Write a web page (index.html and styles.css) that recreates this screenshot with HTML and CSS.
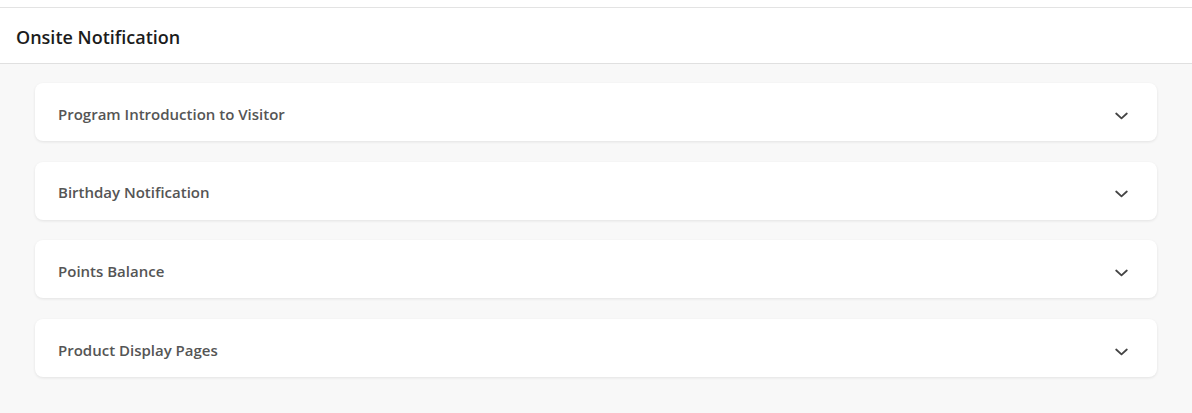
FILE: index.html
```html
<!DOCTYPE html>
<html>
<head>
<meta charset="utf-8">
<link rel="stylesheet" href="styles.css">
</head>
<body>
<div class="topbar"></div>
<header class="header"><h1 class="title">Onsite Notification</h1></header>
<main class="content">
  <div class="card"><span class="card-title">Program Introduction to Visitor</span><svg class="chev" viewBox="0 0 13 8" width="13" height="8"><path d="M1.2 1.5 L6.5 6.3 L11.8 1.5" fill="none" stroke="#444" stroke-width="1.8" stroke-linecap="round" stroke-linejoin="round"/></svg></div>
  <div class="card"><span class="card-title">Birthday Notification</span><svg class="chev" viewBox="0 0 13 8" width="13" height="8"><path d="M1.2 1.5 L6.5 6.3 L11.8 1.5" fill="none" stroke="#444" stroke-width="1.8" stroke-linecap="round" stroke-linejoin="round"/></svg></div>
  <div class="card"><span class="card-title">Points Balance</span><svg class="chev" viewBox="0 0 13 8" width="13" height="8"><path d="M1.2 1.5 L6.5 6.3 L11.8 1.5" fill="none" stroke="#444" stroke-width="1.8" stroke-linecap="round" stroke-linejoin="round"/></svg></div>
  <div class="card"><span class="card-title">Product Display Pages</span><svg class="chev" viewBox="0 0 13 8" width="13" height="8"><path d="M1.2 1.5 L6.5 6.3 L11.8 1.5" fill="none" stroke="#444" stroke-width="1.8" stroke-linecap="round" stroke-linejoin="round"/></svg></div>
</main>
</body>
</html>
```

FILE: styles.css
```css
html, body {
  margin: 0;
  padding: 0;
  background: #f8f8f8;
  font-family: "Open Sans", "Noto Sans", sans-serif;
}
.topbar {
  height: 7px;
  background: #ffffff;
  border-bottom: 1px solid #e3e3e3;
}
.header {
  background: #ffffff;
  height: 53px;
  border-bottom: 1px solid #e0e0e0;
  display: flex;
  align-items: center;
  padding: 2px 16px 0;
}
.title {
  margin: 0;
  font-size: 18px;
  font-weight: 600;
  color: #1c1c1c;
  line-height: 1;
}
.content {
  padding: 19px 35px 20px;
  display: flex;
  flex-direction: column;
  gap: 20.7px;
}
.card {
  background: #ffffff;
  border-radius: 8px;
  height: 58px;
  box-shadow: 0 1px 3px rgba(0, 0, 0, 0.09);
  display: flex;
  align-items: center;
  justify-content: space-between;
  padding: 3px 29px 0 23px;
  box-sizing: border-box;
}
.card-title {
  font-size: 15px;
  font-weight: 600;
  color: #555555;
}
.chev {
  display: block;
  margin-top: 4px;
}
```
